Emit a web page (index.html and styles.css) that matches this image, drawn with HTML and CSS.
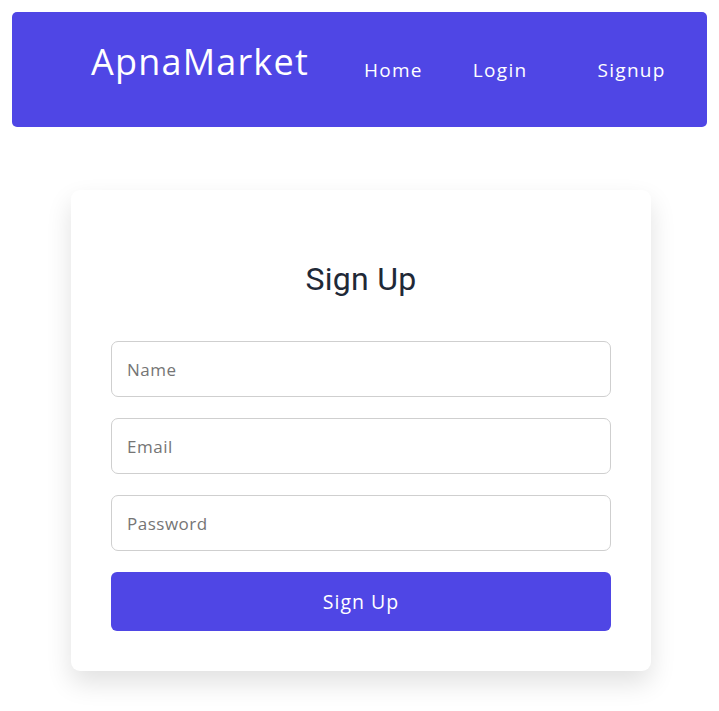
FILE: index.html
```html
<!DOCTYPE html>
<html lang="en">
<head>
<meta charset="utf-8">
<title>ApnaMarket - Sign Up</title>
<link rel="stylesheet" href="styles.css">
</head>
<body>
<header class="navbar">
  <a class="brand" href="#">ApnaMarket</a>
  <nav class="nav-links">
    <a class="nav-link nav-home" href="#">Home</a>
    <a class="nav-link nav-login" href="#">Login</a>
    <a class="nav-link nav-signup" href="#">Signup</a>
  </nav>
</header>
<main class="page">
  <section class="card">
    <h2 class="card-title">Sign Up</h2>
    <form class="form">
      <input class="field" type="text" placeholder="Name">
      <input class="field" type="email" placeholder="Email">
      <input class="field" type="password" placeholder="Password">
      <button class="submit" type="button">Sign Up</button>
    </form>
  </section>
</main>
</body>
</html>
```
FILE: styles.css
```css
* { box-sizing: border-box; }
body {
  margin: 12px;
  background: #ffffff;
  font-family: "Open Sans", "DejaVu Sans", sans-serif;
}
.navbar {
  height: 115px;
  background: #4f46e5;
  border-radius: 5px;
  display: flex;
  align-items: flex-start;
  padding-left: 79px;
}
.brand {
  color: #ffffff;
  text-decoration: none;
  font-size: 36px;
  letter-spacing: 1.2px;
  line-height: 1;
  margin-top: 32px;
}
.nav-links {
  display: flex;
  margin-top: 49px;
  margin-left: 55px;
}
.nav-link {
  color: #ffffff;
  text-decoration: none;
  font-size: 19px;
  letter-spacing: 1.3px;
  line-height: 1;
}
.nav-login { margin-left: 50px; }
.nav-signup { margin-left: 70px; }
.page {
  display: flex;
  justify-content: center;
  padding-top: 63px;
  padding-left: 3px;
  padding-bottom: 40px;
}
.card {
  width: 580px;
  background: #ffffff;
  border-radius: 9px;
  box-shadow: 0 12px 26px rgba(0, 0, 0, 0.12);
  padding: 71px 40px 40px;
}
.card-title {
  margin: 0 0 44px;
  text-align: center;
  font-family: Roboto, "Liberation Sans", sans-serif;
  font-weight: 400;
  font-size: 32px;
  letter-spacing: 0.3px;
  line-height: 36px;
  color: #1f2937;
}
.form {
  display: flex;
  flex-direction: column;
  gap: 21px;
}
.field {
  height: 56px;
  border: 1px solid #cfcfcf;
  border-radius: 7px;
  padding: 0 15px;
  font-family: inherit;
  font-size: 17px;
  letter-spacing: 0.5px;
  color: #333;
  outline: none;
}
.field::placeholder { color: #757575; }
.submit {
  height: 59px;
  border: none;
  border-radius: 6px;
  background: #4f46e5;
  color: #ffffff;
  font-family: inherit;
  font-size: 19.5px;
  letter-spacing: 1px;
  cursor: pointer;
}
```
